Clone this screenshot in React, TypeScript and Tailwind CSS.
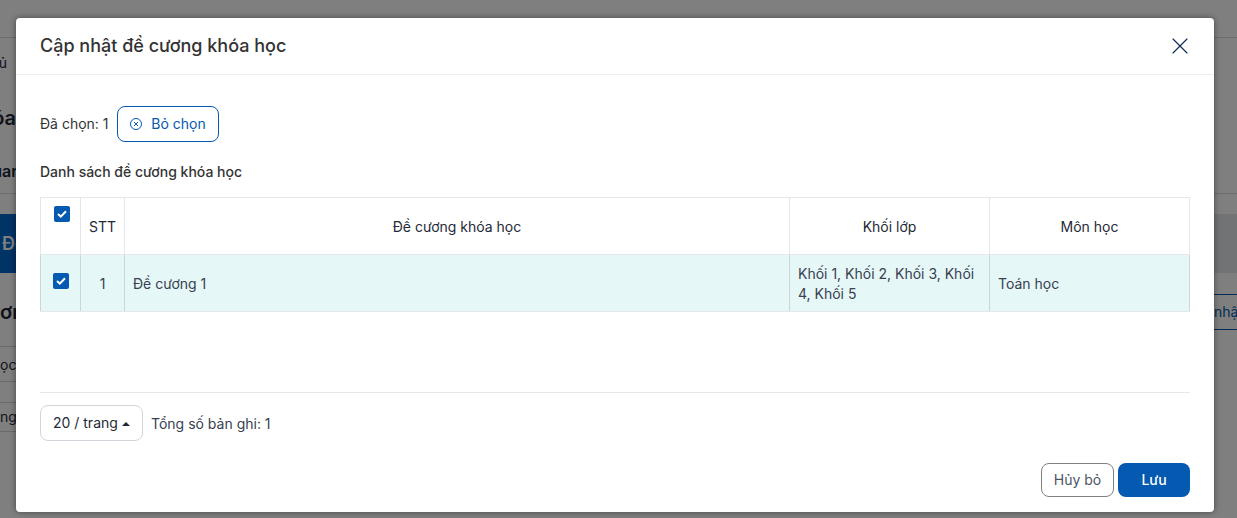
import { X } from 'lucide-react';

function CheckBox({ className = '' }: { className?: string }) {
  return (
    <span className={`flex h-4 w-4 items-center justify-center rounded-[2px] bg-[#0459b0] ${className}`}>
      <svg width="10" height="8" viewBox="0 0 10 8" fill="none" stroke="#fff" strokeWidth="2">
        <polyline points="1,4 3.8,6.6 9,1.2" />
      </svg>
    </span>
  );
}

function CircleX() {
  return (
    <svg width="14" height="14" viewBox="0 0 14 14" fill="none" stroke="#0459b0" strokeWidth="1">
      <circle cx="7" cy="7" r="5.5" />
      <line x1="5" y1="5" x2="9" y2="9" />
      <line x1="9" y1="5" x2="5" y2="9" />
    </svg>
  );
}

// page that sits behind the dialog, only its edges show
function BackPage() {
  return (
    <div className="flex h-[518px] flex-col bg-white text-[#1f2937]">
      <div className="h-[38px] shrink-0 border-b border-[#d9d9d9]" />
      <div className="flex h-[50px] w-[7px] shrink-0 items-center justify-end text-sm">
        <span className="whitespace-nowrap">Trang chủ</span>
      </div>
      <div className="flex h-[60px] w-[16px] shrink-0 items-center justify-end text-xl font-semibold">
        <span className="whitespace-nowrap">Khóa</span>
      </div>
      <div className="flex h-[45px] w-[21px] shrink-0 items-center justify-end text-base font-semibold">
        <span className="whitespace-nowrap">Quan</span>
      </div>
      <div className="h-[21px] shrink-0 border-t border-[#d9d9d9]" />
      <div className="flex h-[59px] shrink-0 justify-between bg-[#e5e7eb]">
        <div className="flex w-[16px] items-center overflow-hidden bg-[#0066cc] text-lg font-semibold text-white">
          <span className="pl-0.5 whitespace-nowrap">Đề</span>
        </div>
      </div>
      <div className="flex h-[73px] shrink-0 items-start justify-between pt-[21px]">
        <span className="flex h-9 items-center text-xl font-semibold whitespace-nowrap">ơn</span>
        <div className="flex h-9 w-[23px] items-center overflow-hidden border-y border-[#0459b0] bg-white text-sm text-[#0459b0]">
          <span className="whitespace-nowrap">nhật</span>
        </div>
      </div>
      <div className="h-[35px] w-[16px] shrink-0 border-t border-[#d1d5db] text-sm leading-[35px]">
        <span className="whitespace-nowrap">ọc</span>
      </div>
      <div className="h-[21px] w-[16px] shrink-0 border-t border-[#d1d5db]" />
      <div className="h-[30px] w-[16px] shrink-0 border-y border-[#d1d5db] text-sm leading-[28px]">
        <span className="whitespace-nowrap">ng</span>
      </div>
    </div>
  );
}

export default function App() {
  return (
    <div className="relative h-[518px] overflow-hidden font-['Inter',sans-serif]">
      <BackPage />
      <div className="absolute inset-0 flex items-start bg-black/50 pt-[18px] pl-4">
        <div className="flex h-[494px] w-[1198px] flex-col rounded-[4px] bg-white text-sm text-[#1f2937] shadow-[0_0_6px_rgba(0,0,0,0.45)]">
          <div className="flex h-[57px] shrink-0 items-center justify-between border-b border-[#eeeeee] pr-5 pl-6">
            <h2 className="text-lg font-medium text-[#333333]">Cập nhật đề cương khóa học</h2>
            <X size={28} strokeWidth={1} className="text-[#0f2c52]" />
          </div>

          <div className="flex flex-1 flex-col px-6">
            <div className="mt-[31px] flex items-center gap-2 text-[#333333]">
              <span>Đã chọn: 1</span>
              <button className="flex h-9 w-[102px] items-center justify-center gap-2 rounded-lg border border-[#0459b0] text-[#0459b0]">
                <CircleX />
                Bỏ chọn
              </button>
            </div>

            <h3 className="mt-5 text-sm leading-[20px] font-medium text-[#333333]">Danh sách đề cương khóa học</h3>

            <table className="mt-[15px] w-[1149px] table-fixed border-collapse">
              <colgroup>
                <col className="w-[40px]" />
                <col className="w-[44px]" />
                <col className="w-[665px]" />
                <col className="w-[200px]" />
                <col className="w-[200px]" />
              </colgroup>
              <thead>
                <tr className="h-[57px] text-center text-[#1f2937]">
                  <th className="border border-[#e5e7eb] pb-[25px] font-normal">
                    <CheckBox className="ml-[13px]" />
                  </th>
                  <th className="border border-[#e5e7eb] pt-0.5 font-normal">STT</th>
                  <th className="border border-[#e5e7eb] pt-0.5 font-normal">Đề cương khóa học</th>
                  <th className="border border-[#e5e7eb] pt-0.5 font-normal">Khối lớp</th>
                  <th className="border border-[#e5e7eb] pt-0.5 font-normal">Môn học</th>
                </tr>
              </thead>
              <tbody>
                <tr className="h-[57px] bg-[#e6f7f7] text-[#374151]">
                  <td className="border border-x-[#cfd4d8] border-y-[#e5e7eb] pb-1">
                    <CheckBox className="ml-3" />
                  </td>
                  <td className="border border-x-[#cfd4d8] border-y-[#e5e7eb] pt-0.5 text-center">1</td>
                  <td className="border border-x-[#cfd4d8] border-y-[#e5e7eb] px-2 pt-0.5">Đề cương 1</td>
                  <td className="border border-x-[#cfd4d8] border-y-[#e5e7eb] px-2 pt-0.5 leading-[20px]">Khối 1, Khối 2, Khối 3, Khối 4, Khối 5</td>
                  <td className="border border-x-[#cfd4d8] border-y-[#e5e7eb] px-2 pt-0.5">Toán học</td>
                </tr>
              </tbody>
            </table>

            <div className="mt-[80px] flex items-center gap-2 border-t border-[#e5e7eb] pt-3">
              <div className="flex h-9 w-[103px] items-center gap-1 rounded-lg border border-[#d1d5db] pl-3 text-[#1f2937]">
                <span>20 / trang</span>
                <svg width="8" height="4" viewBox="0 0 8 4" fill="#1f2937" className="mt-0.5">
                  <polygon points="4,0 8,4 0,4" />
                </svg>
              </div>
              <span className="mt-0.5 text-[#374151]">Tổng số bản ghi: 1</span>
            </div>

            <div className="mt-[22px] flex justify-end gap-1">
              <button className="h-[34px] w-[73px] rounded-lg border border-[#808080] text-[#4b5563]">Hủy bỏ</button>
              <button className="h-[34px] w-[72px] rounded-lg bg-[#0459b0] font-medium text-white">Lưu</button>
            </div>
          </div>
        </div>
      </div>
    </div>
  );
}
